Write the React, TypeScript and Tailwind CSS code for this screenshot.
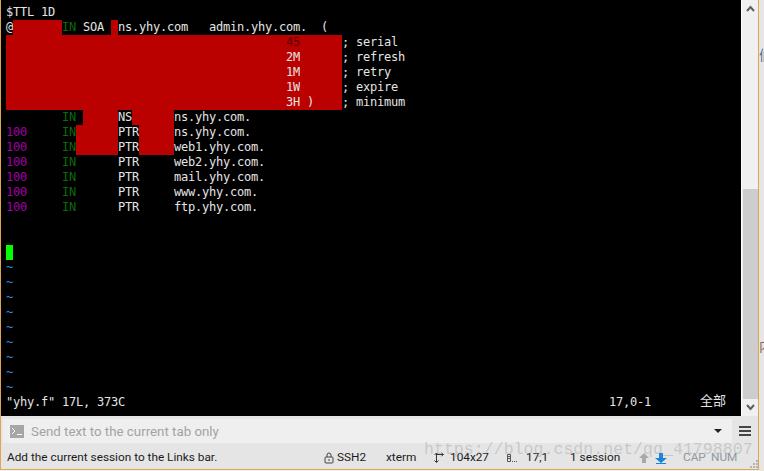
const RED = "bg-[#bb0000]";
const GREEN = "text-[#0b6b0b]";
const PURPLE = "text-[#a000a8]";

type Seg = [string, string?];

function sp(n: number) {
  return " ".repeat(n);
}

const rows: Seg[][] = [
  [["$TTL 1D"]],
  [["@"], [sp(7), RED], ["IN", GREEN], [" SOA "], [" ", RED], ["ns.yhy.com   admin.yhy.com.  ("]],
  [[sp(40), RED], ["45", RED + " text-[#5c0000]"], [sp(6), RED], ["; serial"]],
  [[sp(40), RED], ["2M", RED], [sp(6), RED], ["; refresh"]],
  [[sp(40), RED], ["1M", RED], [sp(6), RED], ["; retry"]],
  [[sp(40), RED], ["1W", RED], [sp(6), RED], ["; expire"]],
  [[sp(40), RED], ["3H )", RED], [sp(4), RED], ["; minimum"]],
  [[sp(8)], ["IN", GREEN], [" "], [sp(5), RED], ["NS"], [sp(6), RED], ["ns.yhy.com."]],
  [["100", PURPLE], [sp(5)], ["IN", GREEN], [sp(6), RED], ["PTR"], [sp(5), RED], ["ns.yhy.com."]],
  [["100", PURPLE], [sp(5)], ["IN", GREEN], [sp(6), RED], ["PTR"], [sp(5), RED], ["web1.yhy.com."]],
  [["100", PURPLE], [sp(5)], ["IN", GREEN], [sp(6)], ["PTR"], [sp(5)], ["web2.yhy.com."]],
  [["100", PURPLE], [sp(5)], ["IN", GREEN], [sp(6)], ["PTR"], [sp(5)], ["mail.yhy.com."]],
  [["100", PURPLE], [sp(5)], ["IN", GREEN], [sp(6)], ["PTR"], [sp(5)], ["www.yhy.com."]],
  [["100", PURPLE], [sp(5)], ["IN", GREEN], [sp(6)], ["PTR"], [sp(5)], ["ftp.yhy.com."]],
  [[" "]],
  [[" "]],
  [[" ", "bg-[#00ff00]"]],
  ...Array.from({ length: 9 }, (): Seg[] => [["~", "text-[#2b8fe6]"]]),
];

function Chevron({ up }: { up?: boolean }) {
  return (
    <svg width="9" height="7" viewBox="0 0 9 7" className={up ? "" : "rotate-180"}>
      <path d="M1 6 L4.5 2 L8 6" fill="none" stroke="#5f5f5f" strokeWidth="2" />
    </svg>
  );
}

function Scrollbar() {
  return (
    <div className="flex w-[17px] flex-col border-l border-white bg-[#f0f0f0]">
      <div className="flex h-[17px] items-center justify-center">
        <Chevron up />
      </div>
      <div className="h-[172px]" />
      <div className="mx-auto h-[210px] w-[15px] bg-[#cdcdcd]" />
      <div className="flex h-[17px] items-center justify-center">
        <Chevron />
      </div>
    </div>
  );
}

function Terminal() {
  return (
    <div className="flex h-[416px]">
      <div className="h-full w-[740px] overflow-hidden bg-black pl-[5px] pt-[5px] font-['DejaVu_Sans_Mono',monospace] text-[12px] leading-[15px] tracking-[-0.224px] text-[#e4e4e4]">
        {rows.map((row, i) => (
          <div key={i} className="flex h-[15px] whitespace-pre">
            {row.map((seg, j) => (
              <span key={j} className={"inline-block h-[15px] " + (seg[1] ?? "")}>
                {seg[0]}
              </span>
            ))}
          </div>
        ))}
        <div className="flex h-[15px] whitespace-pre">
          <span className="w-[603px]">"yhy.f" 17L, 373C</span>
          <span className="w-[91px]">17,0-1</span>
          <span className="-mt-[3px] font-['Noto_Sans_CJK_SC',sans-serif] text-[13px] tracking-normal">全部</span>
        </div>
      </div>
      <Scrollbar />
    </div>
  );
}

function InputBar() {
  return (
    <div className="flex h-[27px] bg-[#e5e5e5] pt-[3px]">
      <div className="ml-[2px] flex h-[24px] w-[729px] items-center bg-[#efefef] pl-[7px]">
        <div className="flex h-[13px] w-[14px] items-center bg-[#a6a6a6] pl-[1px]">
          <svg width="12" height="9" viewBox="0 0 12 9">
            <path d="M1 1 L4 4 L1 7" fill="none" stroke="#fff" strokeWidth="1" />
            <path d="M6 7.5 H11" stroke="#fff" strokeWidth="1" />
          </svg>
        </div>
        <span className="ml-[7px] pt-[1px] font-['Roboto',sans-serif] text-[13.3px] text-[#a3a3a3]">
          Send text to the current tab only
        </span>
        <div className="ml-auto mr-[10px] h-0 w-0 border-x-[4px] border-t-[4px] border-x-transparent border-t-[#222]" />
      </div>
      <div className="flex flex-1 flex-col items-center gap-[2px] pt-[7px]">
        <div className="h-[2px] w-[12px] bg-[#444]" />
        <div className="h-[2px] w-[12px] bg-[#444]" />
        <div className="h-[2px] w-[12px] bg-[#444]" />
      </div>
    </div>
  );
}

function StatusBar() {
  return (
    <div className="relative flex h-[26px] items-center overflow-hidden bg-[#e5e5e5] pt-[3px] font-['Roboto',sans-serif] text-[11.8px] text-[#1a1a1a]">
      <span className="ml-[6px] w-[317px]">Add the current session to the Links bar.</span>
      <svg width="10" height="12" viewBox="0 0 10 12" className="text-[#444]">
        <rect x="1" y="5" width="8" height="6" rx="1" fill="none" stroke="currentColor" />
        <path d="M3 5 V3 a2 2 0 0 1 4 0 V5" fill="none" stroke="currentColor" />
        <rect x="4.5" y="7" width="1" height="2" fill="currentColor" />
      </svg>
      <span className="ml-[3px] w-[49px]">SSH2</span>
      <span className="w-[48px]">xterm</span>
      <svg width="10" height="11" viewBox="0 0 10 11">
        <path d="M2.5 1.5 V10 M0.5 3 L2.5 1 L4.5 3 M0.5 8.5 L2.5 10.5 L4.5 8.5 M2.5 2.5 H9 M7.5 1 L9.5 2.5 L7.5 4" fill="none" stroke="#333" />
      </svg>
      <span className="ml-[6px] w-[57px]">104x27</span>
      <svg width="10" height="10" viewBox="0 0 10 10">
        <path d="M0.5 1.5 H3.5 V8.5 H0.5 Z M0.5 3.5 H3.5 M0.5 5.5 H3.5" fill="none" stroke="#555" />
        <path d="M5 8.5 H6 M7 8.5 H8 M9 8.5 H10" stroke="#555" />
      </svg>
      <span className="ml-[9px] w-[44px]">17,1</span>
      <span className="w-[68px]">1 session</span>
      <svg width="12" height="12" viewBox="0 0 12 12">
        <path d="M6 1 L11 6 H8 V11 H4 V6 H1 Z" fill="#a9a9a9" />
      </svg>
      <svg width="14" height="12" viewBox="0 0 14 12" className="ml-[4px]">
        <path d="M5 1 H9 V6 H13 L7 11 L1 6 H5 Z" fill="#1784dc" />
        <rect x="2" y="11" width="10" height="1" fill="#1784dc" />
      </svg>
      <span className="ml-[15px] w-[28px] text-[#8e97a3]">CAP</span>
      <span className="text-[#8e97a3]">NUM</span>
      <div className="absolute bottom-[1px] right-0 grid grid-cols-3 gap-[1px]">
        <i className="h-[2px] w-[2px]" />
        <i className="h-[2px] w-[2px]" />
        <i className="h-[2px] w-[2px] bg-[#b5b5b5]" />
        <i className="h-[2px] w-[2px]" />
        <i className="h-[2px] w-[2px] bg-[#b5b5b5]" />
        <i className="h-[2px] w-[2px] bg-[#b5b5b5]" />
        <i className="h-[2px] w-[2px] bg-[#b5b5b5]" />
        <i className="h-[2px] w-[2px] bg-[#b5b5b5]" />
        <i className="h-[2px] w-[2px] bg-[#b5b5b5]" />
      </div>
    </div>
  );
}

export default function App() {
  return (
    <div className="relative flex h-[471px] w-[764px] overflow-hidden bg-[#f1f1f1]">
      <div className="h-[470px] w-[759px] shrink-0 border-b border-l border-r border-[#dfa650]">
        <Terminal />
        <InputBar />
        <StatusBar />
      </div>
      <div className="w-[5px] overflow-hidden bg-[#e6e6e6] font-['Noto_Sans_CJK_SC',sans-serif] text-[14px] leading-[16px]">
        <div className="mt-[46px] whitespace-pre text-[#3f6fa8]">们</div>
        <div className="mt-[275px] whitespace-pre text-[#7f6a5a]">内</div>
      </div>
      {/* csdn watermark */}
      <div className="pointer-events-none absolute left-[424px] top-[440px] font-['Liberation_Mono',monospace] text-[16.6px] leading-[20px] whitespace-pre text-[#8f8f8f]/35">
        https://blog.csdn.net/qq_41798807
      </div>
    </div>
  );
}
